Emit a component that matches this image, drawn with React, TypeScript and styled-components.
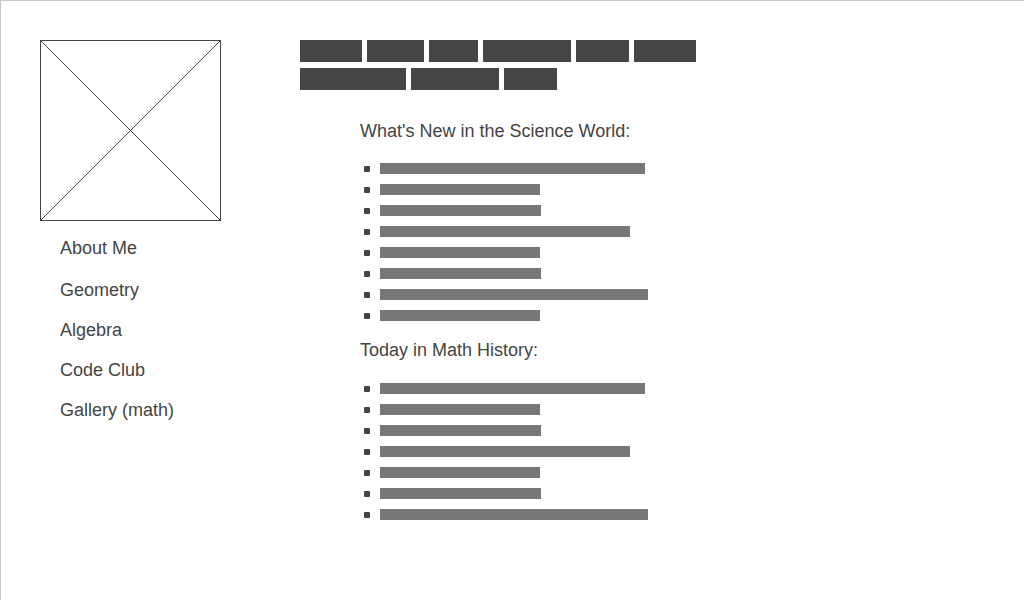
import React from "react";
import styled, { createGlobalStyle } from "styled-components";

const Global = createGlobalStyle`
  html, body { margin: 0; padding: 0; background: #fff; overflow: hidden; }
  * { box-sizing: border-box; }
`;

const Frame = styled.div`
  width: 1024px;
  height: 600px;
  border-top: 1px solid #c8c8c8;
  border-left: 1px solid #c8c8c8;
  padding: 39px 0 0 39px;
  display: flex;
  align-items: flex-start;
  gap: 79px;
  font-family: "Liberation Sans", Arial, sans-serif;
  color: #444;
`;

const Sidebar = styled.aside`
  width: 181px;
  flex: none;
  display: flex;
  flex-direction: column;
`;

const Placeholder = styled.div`
  width: 181px;
  height: 181px;
  border: 1px solid #444;
  svg { display: block; width: 100%; height: 100%; }
`;

const NavList = styled.nav`
  margin-top: 17px;
  padding-left: 20px;
  display: flex;
  flex-direction: column;
`;

const NavItem = styled.div`
  font-size: 18px;
  line-height: 20px;
  white-space: nowrap;
  margin-bottom: 20px;
  &:first-child { margin-bottom: 22px; }
`;

const Main = styled.main`
  display: flex;
  flex-direction: column;
`;

const TabRow = styled.div`
  width: 420px;
  display: flex;
  flex-wrap: wrap;
  column-gap: 5px;
  row-gap: 6px;
`;

const Tab = styled.div<{ $w: number }>`
  width: ${(p) => p.$w}px;
  height: 22px;
  background: #464646;
`;

const Content = styled.div`
  padding: 31px 0 0 60px;
  display: flex;
  flex-direction: column;
`;

const Heading = styled.h2<{ $first?: boolean }>`
  margin: ${(p) => (p.$first ? "0" : "14px 0 0")};
  font-size: 18px;
  line-height: 20px;
  font-weight: normal;
  white-space: nowrap;
`;

const List = styled.ul<{ $gap: number }>`
  margin: ${(p) => p.$gap}px 0 0;
  padding: 0;
  list-style: none;
`;

const Item = styled.li`
  height: 21px;
  display: flex;
  align-items: center;
`;

const Bullet = styled.span`
  width: 6px;
  height: 6px;
  margin: 0 10px 0 4px;
  border-radius: 1px;
  background: #444;
  flex: none;
`;

const Bar = styled.span<{ $w: number }>`
  width: ${(p) => p.$w}px;
  height: 11px;
  background: #777;
`;

const tabs1 = [62, 57, 49, 88, 53, 62, 106, 88, 53];
const list1 = [265, 160, 161, 250, 160, 161, 268, 160];
const list2 = [265, 160, 161, 250, 160, 161, 268];

export default function App() {
  return (
    <>
      <Global />
      <Frame>
        <Sidebar>
          <Placeholder>
            <svg viewBox="0 0 179 179" preserveAspectRatio="none">
              <line x1="0" y1="0" x2="179" y2="179" stroke="#444" strokeWidth="1" />
              <line x1="179" y1="0" x2="0" y2="179" stroke="#444" strokeWidth="1" />
            </svg>
          </Placeholder>
          <NavList>
            <NavItem>About Me</NavItem>
            <NavItem>Geometry</NavItem>
            <NavItem>Algebra</NavItem>
            <NavItem>Code Club</NavItem>
            <NavItem>Gallery (math)</NavItem>
          </NavList>
        </Sidebar>
        <Main>
          <TabRow>
            {tabs1.map((w, i) => (
              <Tab key={i} $w={w} />
            ))}
          </TabRow>
          <Content>
            <Heading $first>What's New in the Science World:</Heading>
            <List $gap={17}>
              {list1.map((w, i) => (
                <Item key={i}>
                  <Bullet />
                  <Bar $w={w} />
                </Item>
              ))}
            </List>
            <Heading>Today in Math History:</Heading>
            <List $gap={18}>
              {list2.map((w, i) => (
                <Item key={i}>
                  <Bullet />
                  <Bar $w={w} />
                </Item>
              ))}
            </List>
          </Content>
        </Main>
      </Frame>
    </>
  );
}
